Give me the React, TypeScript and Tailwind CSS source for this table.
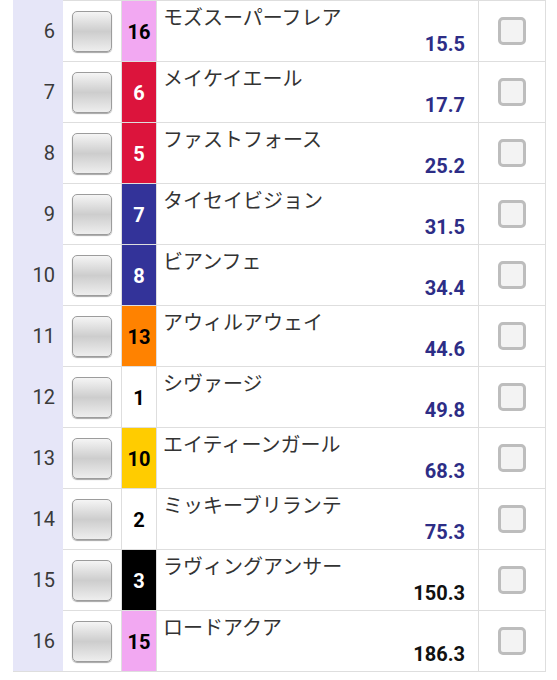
import React from 'react';

type Row = { no: number; umaban: number; waku: number; name: string; odds: string };

const rows: Row[] = [
    { no: 6, umaban: 16, waku: 8, name: 'モズスーパーフレア', odds: '15.5' },
    { no: 7, umaban: 6, waku: 3, name: 'メイケイエール', odds: '17.7' },
    { no: 8, umaban: 5, waku: 3, name: 'ファストフォース', odds: '25.2' },
    { no: 9, umaban: 7, waku: 4, name: 'タイセイビジョン', odds: '31.5' },
    { no: 10, umaban: 8, waku: 4, name: 'ビアンフェ', odds: '34.4' },
    { no: 11, umaban: 13, waku: 7, name: 'アウィルアウェイ', odds: '44.6' },
    { no: 12, umaban: 1, waku: 1, name: 'シヴァージ', odds: '49.8' },
    { no: 13, umaban: 10, waku: 5, name: 'エイティーンガール', odds: '68.3' },
    { no: 14, umaban: 2, waku: 1, name: 'ミッキーブリランテ', odds: '75.3' },
    { no: 15, umaban: 3, waku: 2, name: 'ラヴィングアンサー', odds: '150.3' },
    { no: 16, umaban: 15, waku: 8, name: 'ロードアクア', odds: '186.3' },
];

const wakuStyle: Record<number, string> = {
    1: 'bg-white text-black',
    2: 'bg-black text-white',
    3: 'bg-[#dc143c] text-white',
    4: 'bg-[#333399] text-white',
    5: 'bg-[#ffcc00] text-black',
    6: 'bg-[#2e9e4a] text-white',
    7: 'bg-[#ff8200] text-black',
    8: 'bg-[#f2a8f2] text-black',
};

export default function App() {
    return (
        <div className="w-[557px] h-[680px] bg-white pl-[13px] font-['Roboto','Noto_Sans_CJK_JP',sans-serif] text-[#333]">
            <div className="w-[533px] border-r border-b border-[#dedede]">
                {rows.map((r, i) => (
                    <div key={i} className="flex h-[61px]">
                        {/* rank */}
                        <div className="w-[50px] bg-[#e6e6f8] flex items-center justify-end pr-[8px] text-[20px] text-[#3a3a3a]">
                            {r.no}
                        </div>
                        <div className="flex flex-1 border-t border-[#dedede]">
                            {/* select button */}
                            <div className="w-[59px] flex items-center justify-center border-r border-[#dedede]">
                                <div className="w-[40px] h-[41px] rounded-[5px] border border-[#9c9c9c] bg-gradient-to-b from-[#f5f5f5] via-[#cdcdcd] to-[#eeeeee] shadow-[0_1px_1px_rgba(0,0,0,0.35)]" />
                            </div>
                            {/* umaban */}
                            <div className={`w-[35px] flex items-center justify-center border-r border-[#dedede] text-[20px] font-bold pt-[1px] ${wakuStyle[r.waku]}`}>
                                {r.umaban}
                            </div>
                            {/* name + odds */}
                            <div className="w-[322px] flex flex-col justify-between border-r border-[#dedede] pl-[6px] pr-[13px] pt-[3px] pb-[5px]">
                                <div className="text-[20px] leading-[28px] text-[#333]">{r.name}</div>
                                <div className={`text-right text-[20px] leading-[24px] font-bold ${parseFloat(r.odds) >= 100 ? 'text-[#111]' : 'text-[#2d2d86]'}`}>
                                    {r.odds}
                                </div>
                            </div>
                            {/* checkbox */}
                            <div className="flex-1 flex items-center justify-center">
                                <div className="w-[28px] h-[28px] rounded-[5px] border-[3px] border-[#bdbdbd] bg-[#f3f3f3]" />
                            </div>
                        </div>
                    </div>
                ))}
            </div>
        </div>
    );
}
